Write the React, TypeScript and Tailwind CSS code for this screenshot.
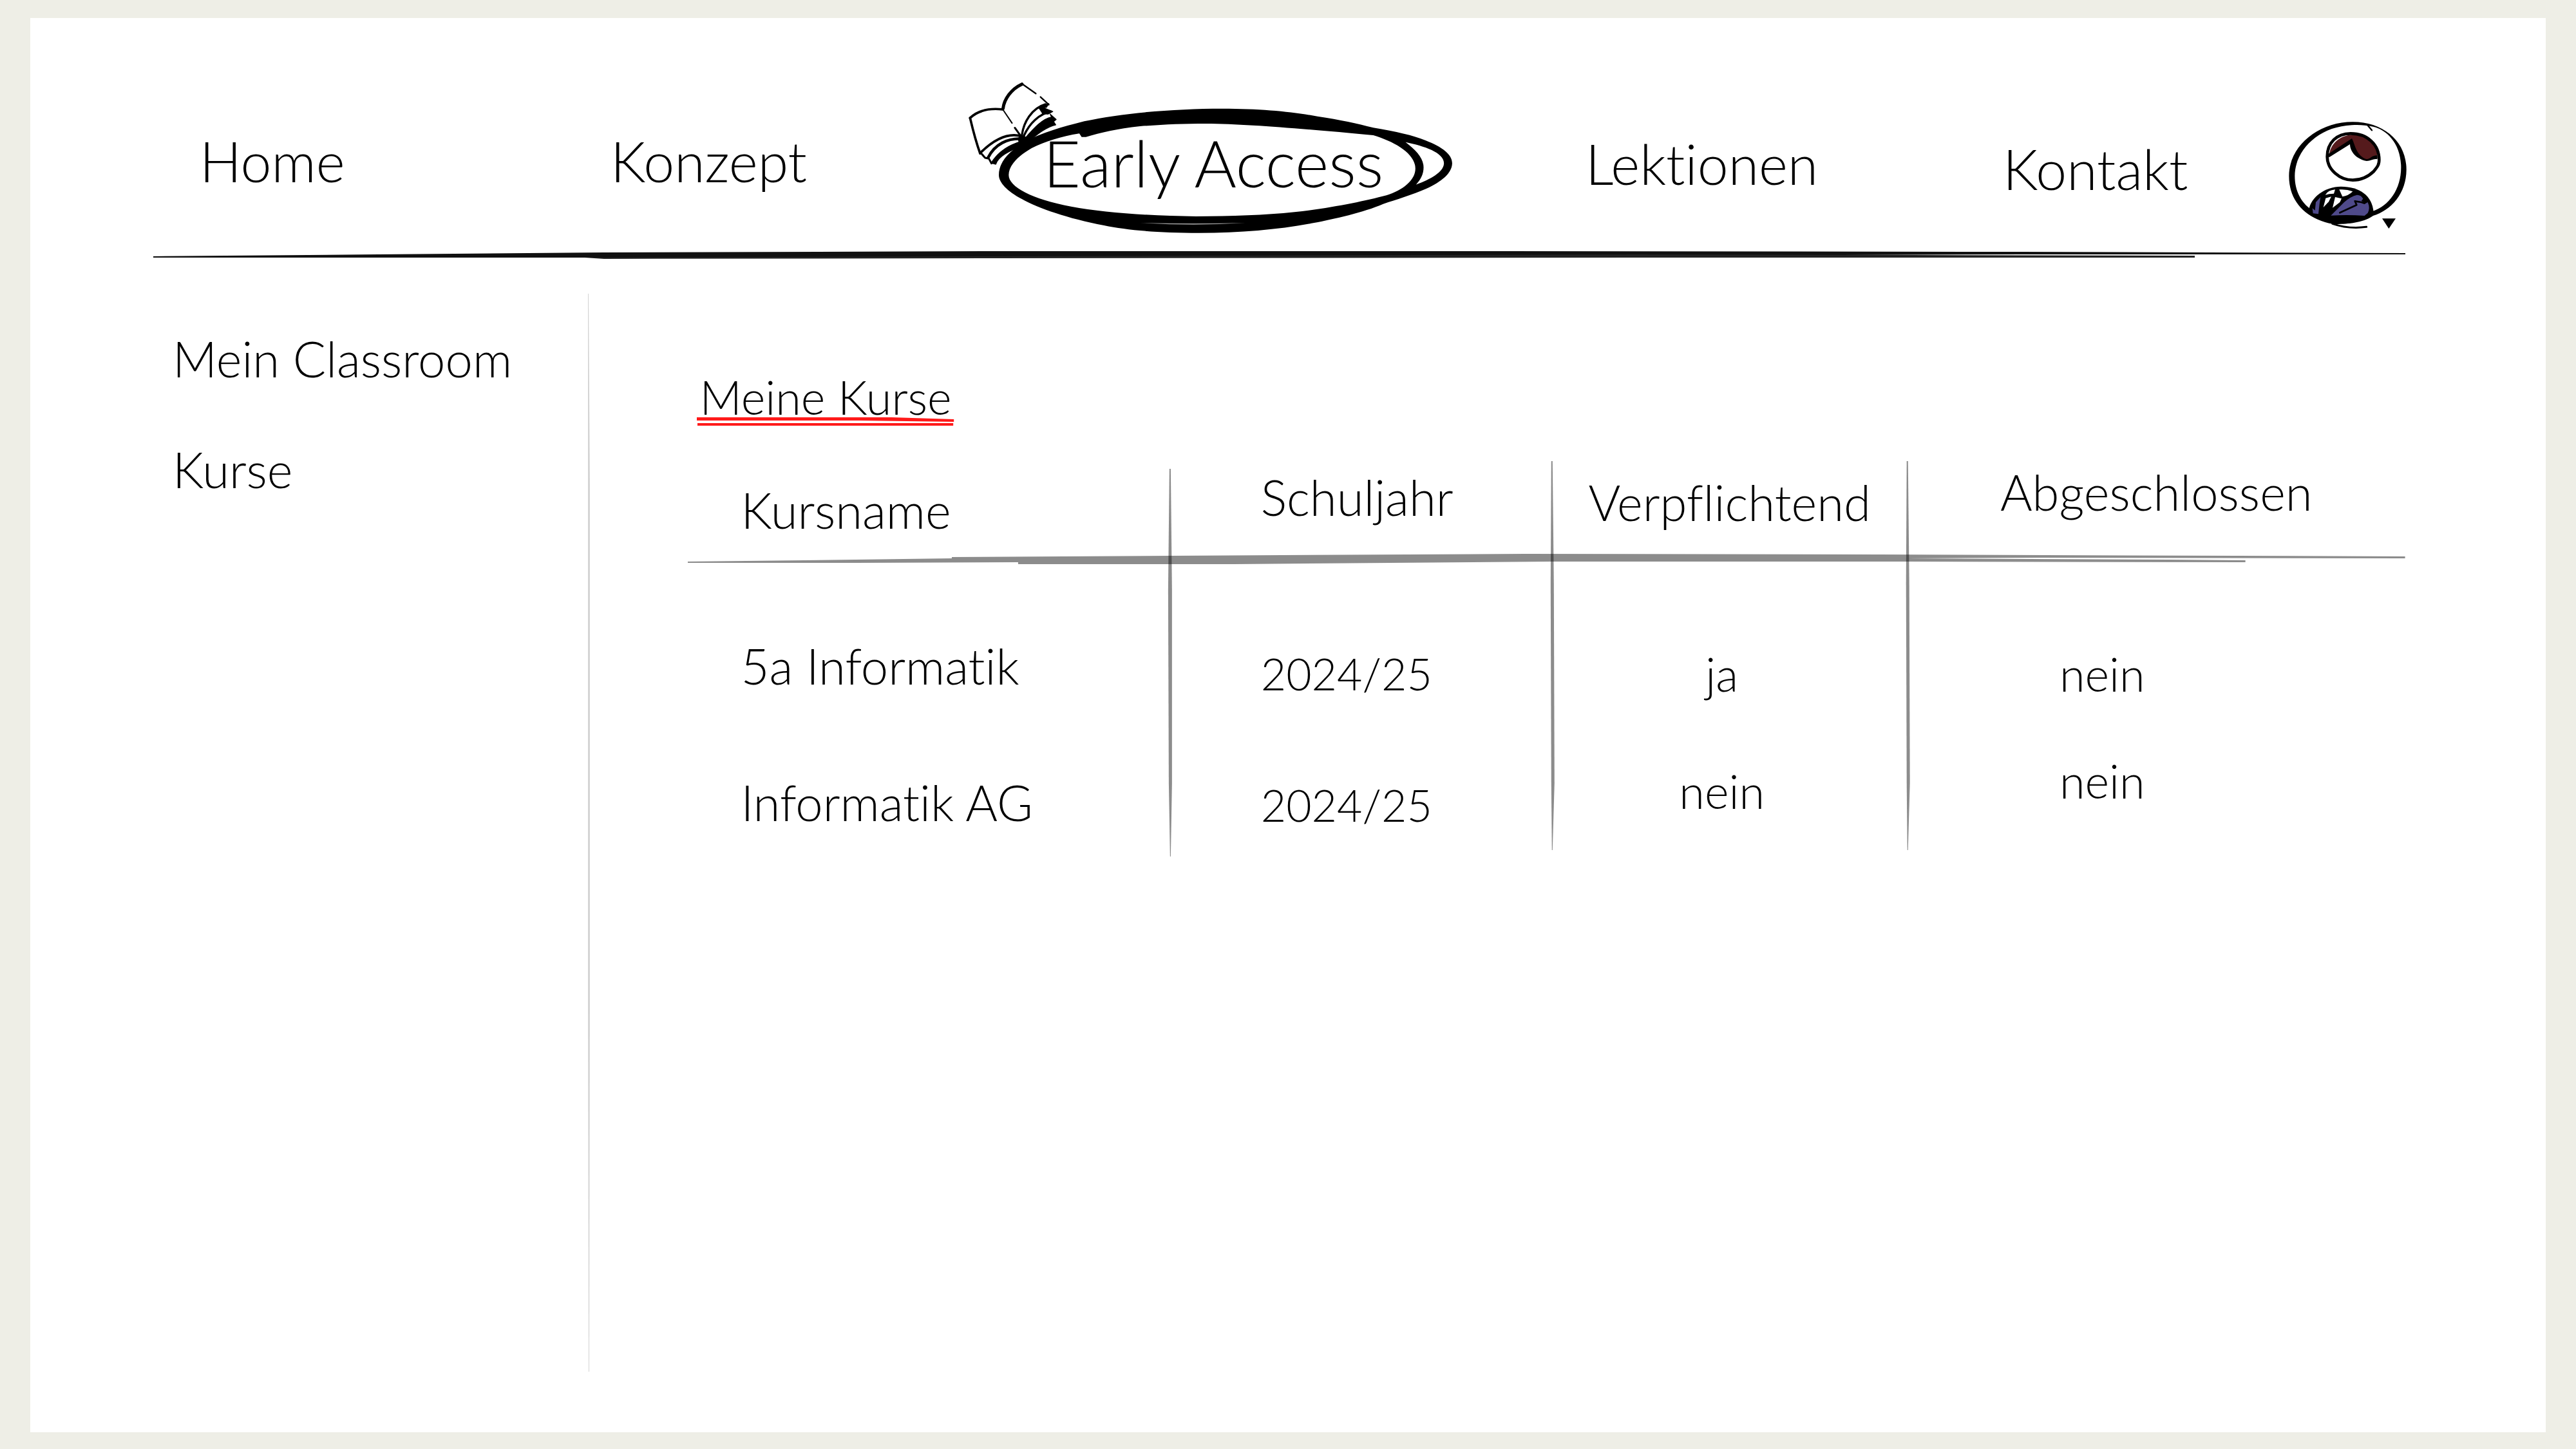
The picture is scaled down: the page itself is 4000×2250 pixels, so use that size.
import React from "react";

function Book() {
  return (
    <svg viewBox="30 15 440 400" className="absolute -top-[79px] -left-[120px] h-[133px] w-[147px]" fill="none" stroke="#000" strokeLinecap="round" strokeLinejoin="round" aria-hidden="true">
      <path d="M48 190C85 158 135 143 200 150L290 285C235 260 165 285 95 358Z" fill="#fff" stroke="none" />
      <path d="M200 150C205 100 240 55 290 30L415 128C340 150 305 200 290 285Z" fill="#fff" stroke="none" />
      <path d="M48 190C85 155 135 143 200 150" strokeWidth="11" />
      <path d="M48 190C62 250 75 300 95 356" strokeWidth="11" />
      <path d="M202 146C207 102 240 55 290 32" strokeWidth="15" />
      <path d="M290 30L355 76" strokeWidth="7" />
      <path d="M377 92L416 128" strokeWidth="7" />
      <path d="M202 152L244 214" strokeWidth="6" />
      <path d="M257 236L285 275" strokeWidth="9" />
      <path d="M290 270C298 210 335 145 400 126" strokeWidth="10" />
      <path d="M300 272C325 215 370 172 425 160" strokeWidth="10" />
      <path d="M365 140L416 123L404 141L385 140L434 160L412 172L385 170" fill="#000" strokeWidth="4" />
      <path d="M300 290C340 245 385 192 428 186L422 172L450 197L438 207L448 222C405 232 365 262 300 318Z" fill="#000" strokeWidth="4" />
      <path d="M288 275C235 260 175 275 97 352" strokeWidth="11" />
      <path d="M285 287C225 285 165 310 132 375" strokeWidth="13" />
      <path d="M290 298C235 315 185 340 146 400L168 406C180 370 225 345 300 318Z" fill="#000" strokeWidth="4" />
      <path d="M97 352L118 376L136 380L148 402" strokeWidth="9" />
      <circle cx="292" cy="291" r="20" fill="#000" />
    </svg>
  );
}

function Ring() {
  return (
    <svg viewBox="40 45 1490 720" preserveAspectRatio="none" className="absolute -top-[79px] -left-[120px] h-[240px] w-[760px]" aria-hidden="true">
      <path
        fillRule="evenodd"
        d="M140 485C140 425 170 375 225 325C270 290 330 262 400 235C520 195 680 176 820 176C940 176 1030 190 1110 212C1180 228 1230 245 1280 265C1350 283 1400 300 1440 325C1490 355 1520 390 1520 430C1520 475 1490 515 1440 550C1400 577 1350 600 1310 620C1250 660 1160 690 1100 708C1000 738 880 755 750 755C620 755 530 742 460 720C350 688 260 640 210 597C165 560 140 520 140 485ZM170 485C170 440 200 395 240 360C280 330 330 305 385 292L392 308L405 308C450 288 500 270 570 258C640 250 700 246 770 246C900 248 1050 268 1280 300C1345 330 1408 385 1408 455C1408 510 1370 555 1320 580C1250 608 1150 640 1040 658C950 672 850 678 740 678C600 676 460 660 360 632C240 597 170 540 170 485ZM1378 332C1435 350 1495 380 1495 430C1495 470 1455 505 1410 530C1425 505 1433 480 1433 450C1433 405 1410 370 1378 332Z"
      />
      <path d="M570 708Q735 724 890 708Q735 714 570 708Z" fill="#999" />
    </svg>
  );
}

function Avatar() {
  return (
    <svg viewBox="150 84 555 510" className="h-[170px] w-[185px] overflow-visible" fill="none" stroke="#000" strokeLinecap="round" strokeLinejoin="round" aria-hidden="true">
      <path
        stroke="none"
        fill="#000"
        fillRule="evenodd"
        d="M460 88C605 88 710 180 710 310C710 420 640 500 555 525C510 560 400 570 350 560C230 530 163 450 163 340C163 200 300 88 460 88ZM455 103C300 110 190 220 190 340C190 410 220 460 258 490L550 505C630 480 685 400 685 300C685 190 620 125 555 110C520 103 490 101 455 103Z"
      />
      <path d="M530 104L549 127" strokeWidth="7" />
      <path d="M365 562Q440 588 524 577" strokeWidth="9" />
      <path d="M350 245C355 190 400 150 460 148C540 150 577 200 575 258L530 266C480 250 460 215 455 170Z" fill="#551a1c" stroke="none" />
      <path d="M450 142C530 142 583 195 583 265C583 290 572 300 558 318C530 345 500 359 460 359C400 359 341 310 341 250C341 185 385 142 450 142Z" strokeWidth="14" />
      <path d="M456 165C472 195 475 245 525 262C545 260 545 245 574 244L574 262C555 258 545 270 525 270C480 262 448 230 447 192L350 253L342 240Z" fill="#000" stroke="none" />
      <path d="M256 495C265 440 330 389 405 389C490 389 552 430 557 510C520 560 400 570 340 555C300 540 262 520 256 495Z" fill="#000" stroke="none" />
      <path d="M358 524L420 462Q450 435 480 428Q500 428 508 446L500 456L520 468L530 462Q542 490 530 512L515 525Q440 520 358 524Z" fill="#4f4a8a" stroke="none" />
      <path d="M310 438L305 470L300 517L275 514L272 490L284 500L288 462Z" fill="#4f4a8a" stroke="none" />
      <path d="M332 428Q345 406 378 403L372 422L350 424Z" fill="#fff" stroke="none" />
      <path d="M397 403Q430 400 460 412Q440 432 412 436Z" fill="#fff" stroke="none" />
      <path d="M334 443L360 436L348 460L323 486Z" fill="#fff" stroke="none" />
      <path d="M378 438L408 445L400 462L366 488Z" fill="#fff" stroke="none" />
      <path d="M400 511L478 475L470 457L500 462L515 467" strokeWidth="8" />
      <path d="M597 538H660L628 585Z" fill="#000" stroke="none" />
    </svg>
  );
}

function HeaderRule() {
  return (
    <svg viewBox="0 0 3497 20" preserveAspectRatio="none" className="block h-5 w-full" aria-hidden="true">
      <path d="M0 12L350 9L700 6L1300 4L2100 4L2900 5L3497 7V9L2900 9L2300 11L1400 14L700 14L350 14L0 14Z" fill="#111" />
      <path d="M670 14L1300 12L2300 9L3170 11V14L2300 14L1300 15L700 16Z" fill="#222" />
    </svg>
  );
}

function TableRules() {
  return (
    <svg viewBox="0 0 2667 614" preserveAspectRatio="none" className="pointer-events-none absolute inset-0 size-full" fill="#000" fillOpacity="0.45" aria-hidden="true">
      <path d="M0 156L260 153L410 151V149L750 147L1300 144L1850 145L2667 148V151L2100 150L1894 151L2300 153L2419 154V157L1894 156L1342 156L850 160L513 160V157L260 158L0 158Z" />
      <path d="M748 12H750L752 200L752 500L750 614H749L747 500L746 200Z" />
      <path d="M1341 0H1343L1345 190L1346 500L1343 604H1342L1341 500L1340 190Z" />
      <path d="M1893 0H1895L1897 190L1898 500L1895 604H1894L1893 500L1892 190Z" />
    </svg>
  );
}

const navItems = [
  { label: "Home", place: "pt-3" },
  { label: "Konzept", place: "pt-3" },
  { label: "Early Access", place: "", active: true },
  { label: "Lektionen", place: "pt-4" },
  { label: "Kontakt", place: "pt-6" },
];

const headings = [
  { label: "Kursname", place: "w-[28.1%] pt-8 pl-[82px] text-left" },
  { label: "Schuljahr", place: "w-[22.2%] pt-3 pl-[140px] text-left" },
  { label: "Verpflichtend", place: "w-[20.7%] pt-5 text-center" },
  { label: "Abgeschlossen", place: "w-[29%] pt-1 text-center" },
];

const courses = [
  { name: "5a Informatik", year: "2024/25", required: "ja", done: "nein", height: "h-[234px]", drops: ["pt-[124px]", "pt-[136px]", "pt-[136px]", "pt-[136px]"] },
  { name: "Informatik AG", year: "2024/25", required: "nein", done: "nein", height: "h-[230px]", drops: ["pt-[102px]", "pt-[106px]", "pt-[84px]", "pt-[68px]"] },
];

export default function App() {
  return (
    <div className="flex min-h-screen flex-col bg-[#eeeee6] px-[47px] pt-7 pb-[26px] font-['Lato','Open_Sans',sans-serif] font-light text-black [font-variant-ligatures:none]">
      <div className="flex flex-1 flex-col bg-white pr-[218px] pl-[191px]">
        <header className="pt-40">
          <nav className="grid min-h-[198px] grid-cols-[638fr_672fr_842fr_648fr_440fr_185fr] items-start pl-[72px] text-[86px] leading-[100px]">
            {navItems.map((item) =>
              item.active ? (
                <div key={item.label} className="pt-4">
                  <a href="#early-access" aria-current="page" className="relative block text-[100px] leading-[96px] whitespace-nowrap">
                    <Ring />
                    <Book />
                    <span className="relative">{item.label}</span>
                  </a>
                </div>
              ) : (
                <a key={item.label} href={"#" + item.label.toLowerCase()} className={item.place}>
                  {item.label}
                </a>
              )
            )}
            <button type="button" aria-label="Profil" className="cursor-pointer">
              <Avatar />
            </button>
          </nav>
          <HeaderRule />
        </header>

        <div className="flex flex-1">
          <aside className="flex w-[19.4%] justify-between pt-[50px] pb-[94px]">
            <nav className="flex flex-col gap-[84px] pt-[57px] pl-[30px] text-[76px] leading-[88px]">
              <a href="#classroom">Mein Classroom</a>
              <a href="#kurse">Kurse</a>
            </nav>
            <svg viewBox="0 0 4 1674" preserveAspectRatio="none" className="w-1 self-stretch" aria-hidden="true">
              <path d="M1 0H2L4 300L4 1100L3 1674H2L1 1100Z" fill="#d4d4d4" />
            </svg>
          </aside>

          <main className="ml-[152px] flex-1 pt-[166px]">
            <h1 className="ml-3.5 w-fit px-1 text-[72px] leading-[88px] font-light">
              Meine Kurse
              <svg viewBox="0 0 396 14" preserveAspectRatio="none" className="-mx-1 -mt-3 block h-3.5 w-[calc(100%+8px)]" aria-hidden="true">
                <path d="M0 0L300 0L396 3V7L250 5L0 5ZM1 9H395V13H1Z" fill="#ff1a1a" />
              </svg>
            </h1>
            <div className="relative mt-[54px]">
              <table className="w-full table-fixed border-collapse text-[76px] leading-[88px]">
                <thead>
                  <tr className="h-[150px]">
                    {headings.map((h) => (
                      <th key={h.label} scope="col" className={"align-top font-light " + h.place}>
                        {h.label}
                      </th>
                    ))}
                  </tr>
                </thead>
                <tbody>
                  {courses.map((c) => (
                    <tr key={c.name} className={"align-top " + c.height}>
                      <td className={"pl-[82px] " + c.drops[0]}>{c.name}</td>
                      <td className={"pl-[140px] text-[68px] " + c.drops[1]}>{c.year}</td>
                      <td className={"pr-6 text-center text-[72px] " + c.drops[2]}>{c.required}</td>
                      <td className={"pr-[168px] text-center text-[72px] " + c.drops[3]}>{c.done}</td>
                    </tr>
                  ))}
                </tbody>
              </table>
              <TableRules />
            </div>
          </main>
        </div>
      </div>
    </div>
  );
}
